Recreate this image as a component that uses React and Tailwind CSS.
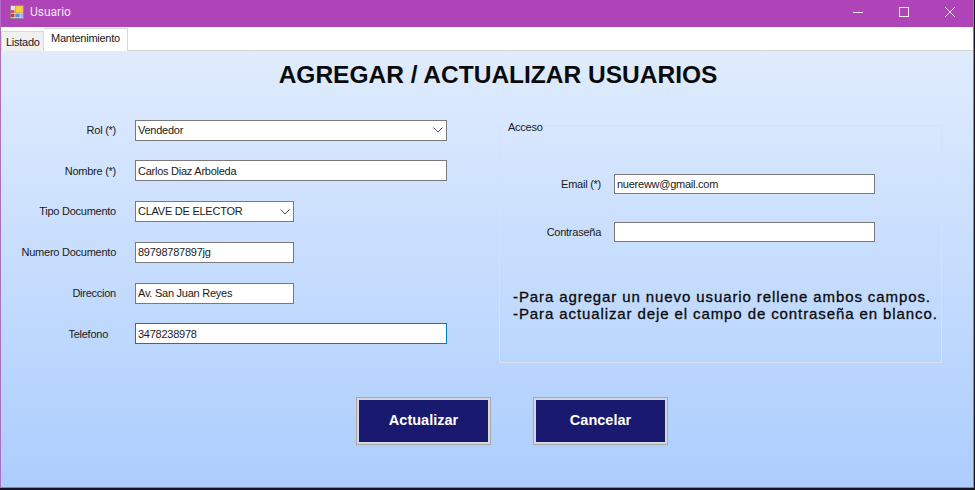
import React from "react";

const uiFont = "font-['Liberation_Sans',sans-serif] text-[11px] tracking-[-0.25px] text-[#1a1a1a]";

const Field = ({ label, width, labelPad = "", focused, select, value }) => (
  <div className="flex items-center h-[20px]">
    <span className={`w-[115px] text-right whitespace-nowrap ${labelPad} ${uiFont}`}>{label}</span>
    <div
      className={`ml-[19px] h-[21px] flex items-center justify-between bg-white border pl-[2px] ${width} ${
        focused ? "border-[#0078d7]" : "border-[#7a7a7a]"
      } ${uiFont}`}
    >
      <span className="whitespace-nowrap">{value}</span>
      {select && (
        <svg width="10" height="6" viewBox="0 0 10 6" className="mr-[3px]">
          <path d="M0.5 0.5 L5 5 L9.5 0.5" fill="none" stroke="#555" strokeWidth="1" />
        </svg>
      )}
    </div>
  </div>
);

const ActionButton = ({ children }) => (
  <button className="w-[135px] h-[48px] bg-[#191970] border-[3px] border-[#d5d8de] outline outline-1 -outline-offset-1 outline-[#a8a8a8] text-white font-['Liberation_Sans',sans-serif] font-bold text-[14.5px]">
    {children}
  </button>
);

const App = () => {
  return (
    <div className="w-[975px] h-[490px] bg-[#17141f] overflow-hidden">
      <div className="w-[974px] h-[488px] border border-t-0 border-[#b06cc4] flex flex-col">
        {/* barra de titulo */}
        <div className="h-[27px] bg-[#ae44b8] flex items-center pl-[9px] pb-[3px] shrink-0">
          <svg width="14" height="14" viewBox="0 0 16 16">
            <rect x="0.5" y="0.5" width="15" height="15" fill="#e9d9ea" stroke="#8c7a90" />
            <rect x="6" y="1" width="9" height="8" fill="#f6cf3f" stroke="#b08a20" strokeWidth="0.5" />
            <rect x="1" y="6" width="4" height="3" fill="#d8403a" />
            <rect x="1" y="10" width="4" height="4" fill="#c83a3a" />
            <rect x="6" y="10" width="5" height="4" fill="#5b8fd8" />
            <rect x="12" y="10" width="3" height="4" fill="#8fb4e6" />
          </svg>
          <span className="ml-[6px] font-['Roboto',sans-serif] text-[12px] text-[#f3e6f5]">Usuario</span>
          <div className="ml-auto flex items-center">
            <svg width="12" height="12" viewBox="0 0 12 12" className="mr-[34px]">
              <path d="M1 6.5 H11" stroke="#f6e9f7" strokeWidth="1" />
            </svg>
            <svg width="12" height="12" viewBox="0 0 12 12" className="mr-[34px]">
              <rect x="1.5" y="1.5" width="9" height="9" fill="none" stroke="#f6e9f7" strokeWidth="1" />
            </svg>
            <svg width="12" height="12" viewBox="0 0 12 12" className="mr-[17px]">
              <path d="M1 1 L11 11 M11 1 L1 11" stroke="#f6e9f7" strokeWidth="1" />
            </svg>
          </div>
        </div>

        {/* pestañas */}
        <div className="h-[24px] bg-white flex items-end border-b border-[#d6d6d6] shrink-0">
          <div className={`h-[20px] w-[43px] -mb-px bg-[#f0f0f0] border border-[#d9d9d9] border-b-0 pl-[4px] leading-[20px] ${uiFont}`}>Listado</div>
          <div className={`h-[23px] w-[84px] -mb-px bg-white border border-l-0 border-[#d9d9d9] border-b-0 pl-[7px] leading-[19px] ${uiFont}`}>Mantenimiento</div>
        </div>

        {/* contenido */}
        <div className="flex-1 bg-gradient-to-b from-[#e0ecfd] to-[#accdfd] flex flex-col">
          <h1 className="mt-[10px] pl-[22px] text-center font-['Liberation_Sans',sans-serif] font-bold text-[24.5px] leading-[27px] text-[#0a0a0a]">
            AGREGAR / ACTUALIZAR USUARIOS
          </h1>

          <div className="flex mt-[31px] h-[250px]">
            <div className="w-[498px] pt-[1px] flex flex-col gap-[20.8px]">
              <Field label="Rol (*)" width="w-[312px]" select value="Vendedor" />
              <Field label="Nombre (*)" width="w-[312px]" value="Carlos Diaz Arboleda" />
              <Field label="Tipo Documento" width="w-[159px]" select value="CLAVE DE ELECTOR" />
              <Field label="Numero Documento" width="w-[159px]" value="89798787897jg" />
              <Field label="Direccion" width="w-[159px]" value="Av. San Juan Reyes" />
              <Field label="Telefono" labelPad="pr-[8px]" width="w-[312px]" focused value="3478238978" />
            </div>

            <fieldset className="w-[443px] h-[246px] -mt-[2px] border border-[#d6e2f2] pl-[13px] min-w-0">
              <legend className={`ml-[-6px] px-[1px] leading-[16px] translate-y-[1.5px] ${uiFont}`}>Acceso</legend>
              <div className="flex items-center mt-[41px] h-[20px]">
                <span className={`w-[88px] text-right whitespace-nowrap ${uiFont}`}>Email (*)</span>
                <div className={`ml-[13px] w-[261px] h-[20px] bg-white border border-[#7a7a7a] pl-[2px] leading-[18px] ${uiFont}`}>nuereww@gmail.com</div>
              </div>
              <div className="flex items-center mt-[28px] h-[20px]">
                <span className={`w-[88px] text-right whitespace-nowrap ${uiFont}`}>Contraseña</span>
                <div className="ml-[13px] w-[261px] h-[20px] bg-white border border-[#7a7a7a]" />
              </div>
              <p className="mt-[46px] font-['Liberation_Sans',sans-serif] text-[15px] tracking-[0.9px] leading-[17px] text-[#0a0a0a] whitespace-nowrap [-webkit-text-stroke:0.3px_#0a0a0a]">
                -Para agregar un nuevo usuario rellene ambos campos.
                <br />
                -Para actualizar deje el campo de contraseña en blanco.
              </p>
            </fieldset>
          </div>

          <div className="flex pl-[355px] gap-[42px] mt-[28px]">
            <ActionButton>Actualizar</ActionButton>
            <ActionButton>Cancelar</ActionButton>
          </div>
        </div>
      </div>
    </div>
  );
};

export default App;
